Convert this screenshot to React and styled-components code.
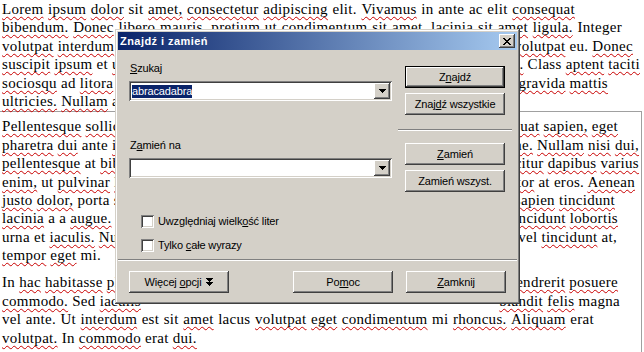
import React from "react";
import styled, { createGlobalStyle } from "styled-components";

const GlobalStyle = createGlobalStyle`
  html, body { margin: 0; padding: 0; background: #fff; }
  body { overflow: hidden; }
`;

const raised = `inset -1px -1px #404040, inset 1px 1px #ffffff, inset -2px -2px #808080, inset 2px 2px #d4d0c8`;
const sunken = `inset 1px 1px #808080, inset -1px -1px #ffffff, inset 2px 2px #404040, inset -2px -2px #d4d0c8`;

const Screen = styled.div`
  position: relative;
  width: 644px;
  height: 352px;
  overflow: hidden;
  background: #fff;
  color: #000;
  font-family: "Liberation Serif", "Times New Roman", serif;
  font-size: 15px;
`;

const Paragraph = styled.div`
  padding-left: 2px;
  margin-top: ${(p) => p.$gap || 0}px;
`;

const LowerSection = styled.div`
  width: 642px;
  box-sizing: border-box;
  margin-top: 1px;
  padding-top: 5px;
  min-height: 260px;
  border-top: 1px solid #a0a0a0;
  border-right: 1px solid #a0a0a0;
`;

const TextLine = styled.div`
  height: 18.4px;
  line-height: 18.4px;
  white-space: nowrap;
  letter-spacing: 0.3px;
`;

const SpreadLine = styled(TextLine)`
  display: flex;
  justify-content: space-between;
  width: ${(p) => p.$w}px;
  & > span { flex-shrink: 0; }
`;

const Wavy = styled.span`
  text-decoration-line: underline;
  text-decoration-style: wavy;
  text-decoration-color: #c80000;
  text-decoration-thickness: 1px;
  text-underline-offset: 2px;
  text-decoration-skip-ink: none;
`;

const OK = new Set([
  "sit", "in", "ante", "ac", "elit", "ut", "integer", "eu", "et", "class", "ad",
  "at", "a", "porta", "mi", "est", "lacus", "erat", "sed", "vel", "magna", "urna",
  "eros", "nisl",
]);
const clean = (w) => w.replace(/[.,]/g, "").toLowerCase();

function InlineWords({ text }) {
  return text.split(" ").map((w, i) => (
    <React.Fragment key={i}>
      {i > 0 && " "}
      {OK.has(clean(w)) ? w : <Wavy>{w}</Wavy>}
    </React.Fragment>
  ));
}

function Line({ d }) {
  if (d.l) {
    return (
      <SpreadLine $w={d.w - 2}>
        <span><InlineWords text={d.l} /></span>
        <span><InlineWords text={d.r} /></span>
      </SpreadLine>
    );
  }
  if (d.w) {
    return (
      <SpreadLine $w={d.w - 2}>
        {d.t.split(" ").map((w, i) =>
          OK.has(clean(w)) ? <span key={i}>{w}</span> : <Wavy key={i}>{w}</Wavy>
        )}
      </SpreadLine>
    );
  }
  return (
    <TextLine>
      <InlineWords text={d.t} />
    </TextLine>
  );
}

const para1 = [
  { t: "Lorem ipsum dolor sit amet, consectetur adipiscing elit. Vivamus in ante ac elit consequat", w: 575 },
  { t: "bibendum. Donec libero mauris, pretium ut condimentum sit amet, lacinia sit amet ligula. Integer", w: 622 },
  { l: "volutpat interdum lectus, sed", r: "volutpat eu. Donec", w: 633 },
  { l: "suscipit ipsum et ultrices", r: "nibh. Class aptent taciti", w: 640 },
  { l: "sociosqu ad litora torquent", r: "ut gravida mattis", w: 608 },
  { t: "ultricies. Nullam a magna." },
];

const para2 = [
  { l: "Pellentesque sollicitudin", r: "consequat sapien, eget", w: 618 },
  { l: "pharetra dui ante ipsum", r: "vitae. Nullam nisi dui,", w: 639 },
  { l: "pellentesque at bibendum", r: "efficitur dapibus varius", w: 639 },
  { l: "enim, ut pulvinar lorem", r: "tortor at eros. Aenean", w: 635 },
  { l: "justo dolor, porta sed", r: "sapien tincidunt", w: 615 },
  { l: "lacinia a a augue. Sed", r: "tincidunt lobortis", w: 618 },
  { l: "urna et iaculis. Nunc", r: "nisl vel tincidunt at,", w: 617 },
  { t: "tempor eget mi." },
];

const para3 = [
  { l: "In hac habitasse platea", r: "hendrerit posuere", w: 618 },
  { l: "commodo. Sed iaculis", r: "blandit felis magna", w: 620 },
  { t: "vel ante. Ut interdum est sit amet lacus volutpat eget condimentum mi rhoncus. Aliquam erat", w: 594 },
  { t: "volutpat. In commodo erat dui." },
];

/* ---------- Dialog ---------- */

const Dialog = styled.div`
  position: absolute;
  left: 115px;
  top: 29px;
  width: 405px;
  height: 275px;
  box-sizing: border-box;
  padding: 3px;
  background: #d4d0c8;
  box-shadow: inset -1px -1px #404040, inset 1px 1px #d4d0c8, inset -2px -2px #808080, inset 2px 2px #ffffff;
  font-family: "Liberation Sans", Arial, sans-serif;
  font-size: 11px;
  letter-spacing: -0.15px;
  color: #000;
  display: flex;
  flex-direction: column;
`;

const TitleBar = styled.div`
  height: 18px;
  display: flex;
  align-items: center;
  justify-content: space-between;
  padding: 0 2px 0 2px;
  background: linear-gradient(90deg, #0a246a 0%, #a6caf0 100%);
  color: #fff;
  font-weight: bold;
  font-size: 11px;
  letter-spacing: 0.45px;
`;

const CloseButton = styled.div`
  width: 16px;
  height: 14px;
  box-sizing: border-box;
  background: #d4d0c8;
  box-shadow: ${raised};
  display: flex;
  align-items: center;
  justify-content: center;
  padding-right: 1px;
`;

const Body = styled.div`
  flex: 1;
  padding: 0 11px;
  display: flex;
  flex-direction: column;
`;

const TopArea = styled.div`
  display: grid;
  grid-template-columns: 263px 100px;
  column-gap: 13px;
  align-items: start;
`;

const LeftCol = styled.div`
  padding-top: 12px;
  display: flex;
  flex-direction: column;
`;

const RightCol = styled.div`
  padding-top: 16px;
  display: flex;
  flex-direction: column;
`;

const Label = styled.div`
  height: 13px;
  line-height: 13px;
  padding-left: 1px;
  margin-top: ${(p) => p.$mt || 0}px;
`;

const Combo = styled.div`
  margin-top: 6px;
  height: 20px;
  box-sizing: border-box;
  background: #fff;
  box-shadow: ${sunken};
  display: flex;
  align-items: center;
  padding: 0 2px 0 3px;
`;

const Selected = styled.span`
  background: #0a246a;
  color: #fff;
  line-height: 13px;
  height: 13px;
`;

const DropButton = styled.div`
  margin-left: auto;
  width: 16px;
  height: 16px;
  box-sizing: border-box;
  background: #d4d0c8;
  box-shadow: ${raised};
  display: flex;
  align-items: center;
  justify-content: center;
`;

const Button = styled.div`
  width: 100px;
  height: 22px;
  box-sizing: border-box;
  margin-top: ${(p) => p.$mt || 0}px;
  background: #d4d0c8;
  box-shadow: ${(p) =>
    p.$default
      ? `inset 0 0 0 1px #000, inset -2px -2px #404040, inset 2px 2px #ffffff, inset -3px -3px #808080, inset 3px 3px #d4d0c8`
      : raised};
  display: flex;
  align-items: center;
  justify-content: center;
  gap: 5px;
  line-height: 13px;
`;

const Mn = styled.span`
  text-decoration: underline;
  text-underline-offset: 1px;
`;

const Etched = styled.div`
  height: 0;
  border-top: 1px solid #808080;
  border-bottom: 1px solid #ffffff;
  margin: ${(p) => p.$m};
`;

const Checks = styled.div`
  margin-top: 23px;
  padding-left: 12px;
  display: flex;
  flex-direction: column;
  gap: 11px;
`;

const CheckRow = styled.div`
  display: flex;
  align-items: center;
  gap: 4px;
  height: 13px;
  line-height: 13px;
`;

const CheckBox = styled.div`
  width: 13px;
  height: 13px;
  box-sizing: border-box;
  background: #fff;
  box-shadow: ${sunken};
`;

const BottomRow = styled.div`
  margin-top: 10px;
  display: flex;
`;

const ButtonGroup = styled.div`
  margin-left: auto;
  display: flex;
  gap: 13px;
`;

const CloseGlyph = () => (
  <svg width="8" height="7" viewBox="0 0 8 7" shapeRendering="crispEdges">
    <path
      fill="#000"
      d="M0 0h2v1H0z M6 0h2v1H6z M1 1h2v1H1z M5 1h2v1H5z M2 2h4v1H2z M3 3h2v1H3z M2 4h4v1H2z M1 5h2v1H1z M5 5h2v1H5z M0 6h2v1H0z M6 6h2v1H6z"
    />
  </svg>
);

const DownArrow = () => (
  <svg width="7" height="4" viewBox="0 0 7 4" shapeRendering="crispEdges">
    <path fill="#000" d="M0 0h7v1H0z M1 1h5v1H1z M2 2h3v1H2z M3 3h1v1H3z" />
  </svg>
);

const DoubleArrow = () => (
  <svg width="7" height="8" viewBox="0 0 7 8" shapeRendering="crispEdges">
    <path
      fill="#000"
      d="M0 0h7v1H0z M1 1h5v1H1z M2 2h3v1H2z M3 3h1v1H3z M0 4h7v1H0z M1 5h5v1H1z M2 6h3v1H2z M3 7h1v1H3z"
    />
  </svg>
);

export default function App() {
  return (
    <>
      <GlobalStyle />
      <Screen>
        <Paragraph>
          {para1.map((d, i) => (
            <Line key={i} d={d} />
          ))}
        </Paragraph>
        <LowerSection>
          <Paragraph>
            {para2.map((d, i) => (
              <Line key={i} d={d} />
            ))}
          </Paragraph>
          <Paragraph $gap={9}>
            {para3.map((d, i) => (
              <Line key={i} d={d} />
            ))}
          </Paragraph>
        </LowerSection>

        <Dialog>
          <TitleBar>
            <span>Znajdź i zamień</span>
            <CloseButton>
              <CloseGlyph />
            </CloseButton>
          </TitleBar>
          <Body>
            <TopArea>
              <LeftCol>
                <Label>
                  <Mn>S</Mn>zukaj
                </Label>
                <Combo>
                  <Selected>abracadabra</Selected>
                  <DropButton>
                    <DownArrow />
                  </DropButton>
                </Combo>
                <Label $mt={38}>
                  Z<Mn>a</Mn>mień na
                </Label>
                <Combo>
                  <DropButton>
                    <DownArrow />
                  </DropButton>
                </Combo>
              </LeftCol>
              <RightCol>
                <Button $default>
                  <span>
                    Z<Mn>n</Mn>ajdź
                  </span>
                </Button>
                <Button $mt={5}>
                  <span>
                    Znaj<Mn>d</Mn>ź wszystkie
                  </span>
                </Button>
                <Etched $m="14px -7px 12px" />
                <Button>
                  <span>
                    <Mn>Z</Mn>amień
                  </span>
                </Button>
                <Button $mt={5}>
                  <span>Zamień wszyst.</span>
                </Button>
              </RightCol>
            </TopArea>
            <Checks>
              <CheckRow>
                <CheckBox />
                <span>
                  Uwzględniaj wielk<Mn>o</Mn>ść liter
                </span>
              </CheckRow>
              <CheckRow>
                <CheckBox />
                <span>
                  Tylko <Mn>c</Mn>ałe wyrazy
                </span>
              </CheckRow>
            </Checks>
            <Etched $m="7px -11px 0" />
            <BottomRow>
              <Button>
                <span>
                  Więcej <Mn>o</Mn>pcji
                </span>
                <DoubleArrow />
              </Button>
              <ButtonGroup>
                <Button>
                  <span>
                    Po<Mn>m</Mn>oc
                  </span>
                </Button>
                <Button>
                  <span>
                    <Mn>Z</Mn>amknij
                  </span>
                </Button>
              </ButtonGroup>
            </BottomRow>
          </Body>
        </Dialog>
      </Screen>
    </>
  );
}
